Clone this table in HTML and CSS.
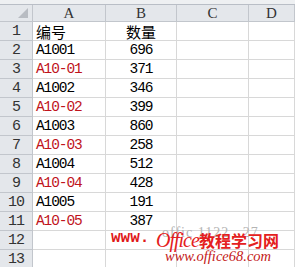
FILE: index.html
```html
<!DOCTYPE html>
<html lang="zh">
<head>
<meta charset="utf-8">
<title>Sheet</title>
<link rel="stylesheet" href="styles.css">
</head>
<body>
<div class="sheet">
  <div class="topstrip"></div>
  <div class="grid">
    <div class="corner"><span class="tri"></span></div>
    <div class="colhead">A</div>
    <div class="colhead">B</div>
    <div class="colhead">C</div>
    <div class="colhead">D</div>

    <div class="rowhead">1</div><div class="cell cjk">编号</div><div class="cell num cjk">数量</div><div class="cell"></div><div class="cell"></div>
    <div class="rowhead">2</div><div class="cell">A1001</div><div class="cell num">696</div><div class="cell"></div><div class="cell"></div>
    <div class="rowhead">3</div><div class="cell red">A10-01</div><div class="cell num">371</div><div class="cell"></div><div class="cell"></div>
    <div class="rowhead">4</div><div class="cell">A1002</div><div class="cell num">346</div><div class="cell"></div><div class="cell"></div>
    <div class="rowhead">5</div><div class="cell red">A10-02</div><div class="cell num">399</div><div class="cell"></div><div class="cell"></div>
    <div class="rowhead">6</div><div class="cell">A1003</div><div class="cell num">860</div><div class="cell"></div><div class="cell"></div>
    <div class="rowhead">7</div><div class="cell red">A10-03</div><div class="cell num">258</div><div class="cell"></div><div class="cell"></div>
    <div class="rowhead">8</div><div class="cell">A1004</div><div class="cell num">512</div><div class="cell"></div><div class="cell"></div>
    <div class="rowhead">9</div><div class="cell red">A10-04</div><div class="cell num">428</div><div class="cell"></div><div class="cell"></div>
    <div class="rowhead">10</div><div class="cell">A1005</div><div class="cell num">191</div><div class="cell"></div><div class="cell"></div>
    <div class="rowhead">11</div><div class="cell red">A10-05</div><div class="cell num">387</div><div class="cell"></div><div class="cell"></div>
    <div class="rowhead">12</div><div class="cell"></div><div class="cell"></div><div class="cell"></div><div class="cell"></div>
    <div class="rowhead">13</div><div class="cell"></div><div class="cell"></div><div class="cell"></div><div class="cell"></div>
  </div>
  <div class="wm-gray">offic 1122 . 27</div>
  <div class="wm-www">www.</div>
  <div class="wm-title"><span class="wm-office">Office</span><span class="wm-cn">教程学习网</span></div>
  <div class="wm-url">www.office68.com</div>
</div>
</body>
</html>
```
FILE: styles.css
```css
html, body {
  margin: 0;
  padding: 0;
  background: #ffffff;
}
.sheet {
  position: relative;
  width: 295px;
  height: 267px;
  overflow: hidden;
  font-family: "Liberation Mono", "Noto Sans CJK SC", monospace;
  font-size: 14px;
  color: #000;
}
.topstrip {
  height: 4px;
  background: #eef0f2;
  border-bottom: 1px solid #b9bec6;
}
.grid {
  display: grid;
  grid-template-columns: 33px 73px 71px 72px 46px;
  grid-template-rows: 17px;
  grid-auto-rows: 19px;
}
.grid > div {
  box-sizing: border-box;
  border-right: 1px solid #d8d8d8;
  border-bottom: 1px solid #d8d8d8;
  white-space: nowrap;
  overflow: hidden;
}
.corner {
  position: relative;
  background: #e4e7eb;
  border-right-color: #c2c6cc !important;
  border-bottom-color: #c2c6cc !important;
}
.tri {
  position: absolute;
  right: 4px;
  bottom: 3px;
  width: 0;
  height: 0;
  border-left: 10px solid transparent;
  border-bottom: 10px solid #b8bcc2;
}
.colhead {
  background: #e4e7eb;
  border-right-color: #c2c6cc !important;
  border-bottom-color: #c2c6cc !important;
  text-align: center;
  line-height: 17px;
  color: #333;
  font-family: "Liberation Serif", serif;
  font-size: 15px;
}
.rowhead {
  background: #e4e7eb;
  border-right-color: #c2c6cc !important;
  border-bottom-color: #c2c6cc !important;
  text-align: center;
  line-height: 19px;
  color: #333;
  font-size: 15px;
  letter-spacing: -1px;
}
.cell {
  padding-left: 3px;
  line-height: 19px;
  font-size: 14.5px;
  letter-spacing: -1.1px;
}
.cjk {
  font-family: "Noto Sans CJK SC", sans-serif;
  font-size: 15px;
  letter-spacing: 0;
}
.num {
  text-align: center;
  padding-left: 0;
}
.red {
  color: #c0141c;
}
.wm-gray {
  position: absolute;
  left: 162px;
  top: 225px;
  font-family: "Liberation Serif", serif;
  font-size: 14px;
  color: #b4b4b4;
  letter-spacing: 1px;
}
.wm-www {
  position: absolute;
  left: 111px;
  top: 229px;
  font-family: "Liberation Mono", monospace;
  font-weight: bold;
  font-size: 16px;
  color: #e01818;
  letter-spacing: 0;
}
.wm-title {
  position: absolute;
  left: 156px;
  top: 229px;
  color: #e42020;
  line-height: 22px;
  white-space: nowrap;
}
.wm-office {
  font-family: "Liberation Serif", serif;
  font-style: italic;
  font-size: 20px;
  letter-spacing: -1px;
}
.wm-cn {
  font-family: "Noto Sans CJK SC", sans-serif;
  font-weight: bold;
  font-size: 16px;
}
.wm-url {
  position: absolute;
  left: 165px;
  top: 248px;
  font-family: "Liberation Serif", serif;
  font-style: italic;
  font-size: 14.5px;
  color: #c41818;
  letter-spacing: 0;
}
```
